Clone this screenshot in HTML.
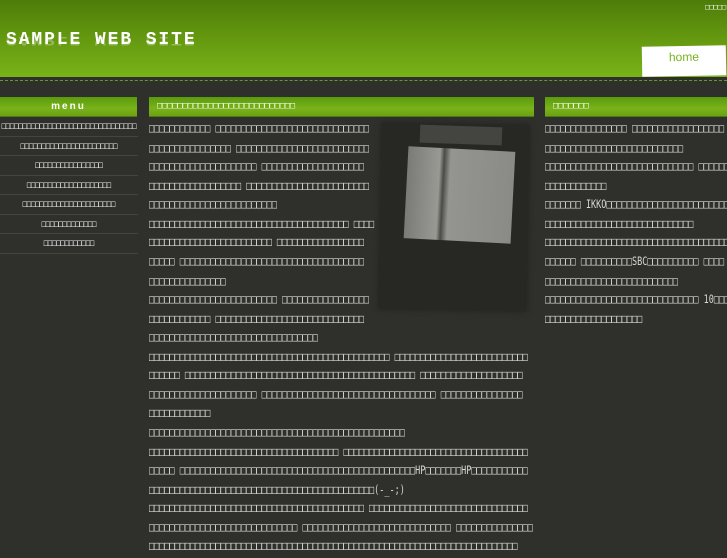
<!DOCTYPE html>
<html><head><meta charset="utf-8"><style>
*{margin:0;padding:0;box-sizing:border-box}
body{width:727px;height:545px;overflow:hidden;background:#2f2f2b;font-family:"DejaVu Sans Mono","Liberation Mono",monospace;color:#d8d8d8;position:relative}
.hdr{position:absolute;left:0;top:0;width:727px;height:77px;background:linear-gradient(#4e7c0a,#62960f 45%,#78b318)}
.dash{position:absolute;left:0;top:80px;width:727px;border-top:1px dashed #6d9430}
.title{position:absolute;left:6px;top:30px;font:bold 18px "Liberation Mono",monospace;letter-spacing:1.9px;color:#fff}
.refl{position:absolute;left:6px;top:47px;font:bold 18px "Liberation Mono",monospace;letter-spacing:1.9px;color:#fff;opacity:.3;transform:scaleY(-0.7);transform-origin:top}
.home{position:absolute;left:642px;top:46px;width:84px;height:30px;background:#fff;transform:rotate(-1deg);color:#78b41e;font:12px "Liberation Sans",sans-serif;text-align:center;padding-top:4px}
.tr{position:absolute;left:705px;top:3px;font-size:7px;color:#fff}
.bar{position:absolute;top:97px;height:20px;background:linear-gradient(#5a9a0c,#79b31a 60%,#6aa212);border-bottom:1px solid #4a7a10;color:#fff;font-size:8.5px;line-height:19px}
.t{font-size:8.5px;line-height:13.57px;white-space:pre;transform:scale(1,1.4);transform-origin:0 0}
.menu div{height:19.5px;line-height:19px;border-bottom:1px solid #454540;text-align:center;font-size:7px;color:#eee;white-space:pre}
.menu span{display:inline-block;transform:scaleY(1.3)}
</style></head><body>
<div class="hdr"></div>
<div class="tr">□□□□□</div>
<div class="title">SAMPLE WEB SITE</div>
<div class="refl">SAMPLE WEB SITE</div>
<div class="home">home</div>
<div class="dash"></div>

<div class="bar" style="left:0;width:137px;text-align:center;font:bold 10px 'Liberation Sans',sans-serif;line-height:19px;letter-spacing:2px">menu</div>
<div class="bar" style="left:149px;width:385px;padding-left:8px">□□□□□□□□□□□□□□□□□□□□□□□□□□□</div>
<div class="bar" style="left:545px;width:182px;padding-left:8px">□□□□□□□</div>

<div class="menu" style="position:absolute;left:0;top:117px;width:138px">
<div><span>□□□□□□□□□□□□□□□□□□□□□□□□□□□□□□□□</span></div>
<div><span>□□□□□□□□□□□□□□□□□□□□□□□</span></div>
<div><span>□□□□□□□□□□□□□□□□</span></div>
<div><span>□□□□□□□□□□□□□□□□□□□□</span></div>
<div><span>□□□□□□□□□□□□□□□□□□□□□□</span></div>
<div><span>□□□□□□□□□□□□□</span></div>
<div><span>□□□□□□□□□□□□</span></div>
</div>

<div style="position:absolute;left:380px;top:124px;width:148px;height:186px;background:#272724;transform:rotate(1deg);box-shadow:0 0 6px #222"></div>
<div style="position:absolute;left:420px;top:126px;width:82px;height:18px;background:#444440;transform:rotate(2deg)"></div>
<div style="position:absolute;left:406px;top:149px;width:107px;height:92px;background:linear-gradient(90deg,#7a7a76,#999994 30%,#4a4a46 34%,#949490 40%,#8a8a86);transform:rotate(3deg)"></div>

<div class="t" style="position:absolute;left:149px;top:121px">□□□□□□□□□□□□ □□□□□□□□□□□□□□□□□□□□□□□□□□□□□□
□□□□□□□□□□□□□□□□ □□□□□□□□□□□□□□□□□□□□□□□□□□
□□□□□□□□□□□□□□□□□□□□□ □□□□□□□□□□□□□□□□□□□□
□□□□□□□□□□□□□□□□□□ □□□□□□□□□□□□□□□□□□□□□□□□
□□□□□□□□□□□□□□□□□□□□□□□□□
□□□□□□□□□□□□□□□□□□□□□□□□□□□□□□□□□□□□□□□ □□□□
□□□□□□□□□□□□□□□□□□□□□□□□ □□□□□□□□□□□□□□□□□
□□□□□ □□□□□□□□□□□□□□□□□□□□□□□□□□□□□□□□□□□□
□□□□□□□□□□□□□□□
□□□□□□□□□□□□□□□□□□□□□□□□□ □□□□□□□□□□□□□□□□□
□□□□□□□□□□□□ □□□□□□□□□□□□□□□□□□□□□□□□□□□□□
□□□□□□□□□□□□□□□□□□□□□□□□□□□□□□□□□
□□□□□□□□□□□□□□□□□□□□□□□□□□□□□□□□□□□□□□□□□□□□□□□ □□□□□□□□□□□□□□□□□□□□□□□□□□
□□□□□□ □□□□□□□□□□□□□□□□□□□□□□□□□□□□□□□□□□□□□□□□□□□□□ □□□□□□□□□□□□□□□□□□□□
□□□□□□□□□□□□□□□□□□□□□ □□□□□□□□□□□□□□□□□□□□□□□□□□□□□□□□□□ □□□□□□□□□□□□□□□□
□□□□□□□□□□□□
□□□□□□□□□□□□□□□□□□□□□□□□□□□□□□□□□□□□□□□□□□□□□□□□□□
□□□□□□□□□□□□□□□□□□□□□□□□□□□□□□□□□□□□□ □□□□□□□□□□□□□□□□□□□□□□□□□□□□□□□□□□□□
□□□□□ □□□□□□□□□□□□□□□□□□□□□□□□□□□□□□□□□□□□□□□□□□□□□□HP□□□□□□□HP□□□□□□□□□□□
□□□□□□□□□□□□□□□□□□□□□□□□□□□□□□□□□□□□□□□□□□□□(-_-;)
□□□□□□□□□□□□□□□□□□□□□□□□□□□□□□□□□□□□□□□□□□ □□□□□□□□□□□□□□□□□□□□□□□□□□□□□□□
□□□□□□□□□□□□□□□□□□□□□□□□□□□□□ □□□□□□□□□□□□□□□□□□□□□□□□□□□□□ □□□□□□□□□□□□□□□
□□□□□□□□□□□□□□□□□□□□□□□□□□□□□□□□□□□□□□□□□□□□□□□□□□□□□□□□□□□□□□□□□□□□□□□□</div>

<div class="t" style="position:absolute;left:545px;top:121px">□□□□□□□□□□□□□□□□ □□□□□□□□□□□□□□□□□□
□□□□□□□□□□□□□□□□□□□□□□□□□□□
□□□□□□□□□□□□□□□□□□□□□□□□□□□□□ □□□□□□□□□□
□□□□□□□□□□□□
□□□□□□□ IKKO□□□□□□□□□□□□□□□□□□□□□□□□□□□
□□□□□□□□□□□□□□□□□□□□□□□□□□□□□
□□□□□□□□□□□□□□□□□□□□□□□□□□□□□□□□□□□□□□□
□□□□□□ □□□□□□□□□□SBC□□□□□□□□□□ □□□□
□□□□□□□□□□□□□□□□□□□□□□□□□□
□□□□□□□□□□□□□□□□□□□□□□□□□□□□□□ 10□□□□□□
□□□□□□□□□□□□□□□□□□□</div>
</body></html>
